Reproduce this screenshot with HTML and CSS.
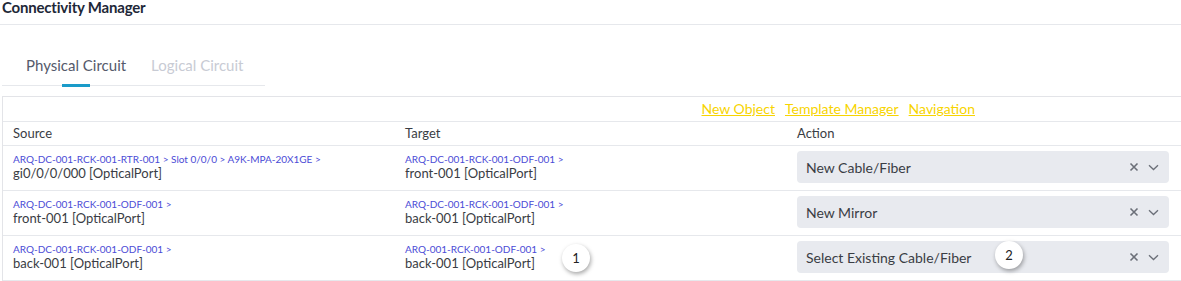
FILE: index.html
```html
<!DOCTYPE html>
<html lang="en">
  <head>
    <meta charset="UTF-8" />
    <meta name="viewport" content="width=device-width, initial-scale=1.0" />
    <title>Connectivity Manager</title>
    <link rel="stylesheet" href="styles.css">
  </head>
  <body>
    <div class="page-header">
      <h1 class="page-title">Connectivity Manager</h1>
    </div>

    <div class="tabs">
      <div class="tab active">Physical Circuit</div>
      <div class="tab">Logical Circuit</div>
    </div>

    <div class="panel">
      <div class="toolbar">
        <a href="#">New Object</a>
        <a href="#">Template Manager</a>
        <a href="#">Navigation</a>
      </div>

      <div class="grid-row grid-head">
        <div class="cell">Source</div>
        <div class="cell">Target</div>
        <div class="cell">Action</div>
      </div>

      <div class="grid-row">
        <div class="cell">
          <div class="path">ARQ-DC-001-RCK-001-RTR-001 &gt; Slot 0/0/0 &gt; A9K-MPA-20X1GE &gt;</div>
          <div class="port">gi0/0/0/000 [OpticalPort]</div>
        </div>
        <div class="cell">
          <div class="path">ARQ-DC-001-RCK-001-ODF-001 &gt;</div>
          <div class="port">front-001 [OpticalPort]</div>
        </div>
        <div class="cell">
          <div class="select">
            <span class="select-value">New Cable/Fiber</span>
            <span class="select-icons">
              <svg width="10" height="10" viewBox="0 0 10 10"><path d="M1.5 1.5 L8.5 8.5 M8.5 1.5 L1.5 8.5" stroke="#6b6f78" stroke-width="1.6" fill="none"/></svg>
              <svg width="11" height="7" viewBox="0 0 11 7"><path d="M1 1.2 L5.5 5.5 L10 1.2" stroke="#6b6f78" stroke-width="1.3" fill="none"/></svg>
            </span>
          </div>
        </div>
      </div>

      <div class="grid-row">
        <div class="cell">
          <div class="path">ARQ-DC-001-RCK-001-ODF-001 &gt;</div>
          <div class="port">front-001 [OpticalPort]</div>
        </div>
        <div class="cell">
          <div class="path">ARQ-DC-001-RCK-001-ODF-001 &gt;</div>
          <div class="port">back-001 [OpticalPort]</div>
        </div>
        <div class="cell">
          <div class="select">
            <span class="select-value">New Mirror</span>
            <span class="select-icons">
              <svg width="10" height="10" viewBox="0 0 10 10"><path d="M1.5 1.5 L8.5 8.5 M8.5 1.5 L1.5 8.5" stroke="#6b6f78" stroke-width="1.6" fill="none"/></svg>
              <svg width="11" height="7" viewBox="0 0 11 7"><path d="M1 1.2 L5.5 5.5 L10 1.2" stroke="#6b6f78" stroke-width="1.3" fill="none"/></svg>
            </span>
          </div>
        </div>
      </div>

      <div class="grid-row">
        <div class="cell">
          <div class="path">ARQ-DC-001-RCK-001-ODF-001 &gt;</div>
          <div class="port">back-001 [OpticalPort]</div>
        </div>
        <div class="cell has-badge">
          <div class="path">ARQ-001-RCK-001-ODF-001 &gt;</div>
          <div class="port">back-001 [OpticalPort]</div>
          <span class="badge badge-1">1</span>
        </div>
        <div class="cell has-badge">
          <div class="select">
            <span class="select-value">Select Existing Cable/Fiber</span>
            <span class="select-icons">
              <svg width="10" height="10" viewBox="0 0 10 10"><path d="M1.5 1.5 L8.5 8.5 M8.5 1.5 L1.5 8.5" stroke="#6b6f78" stroke-width="1.6" fill="none"/></svg>
              <svg width="11" height="7" viewBox="0 0 11 7"><path d="M1 1.2 L5.5 5.5 L10 1.2" stroke="#6b6f78" stroke-width="1.3" fill="none"/></svg>
            </span>
          </div>
          <span class="badge badge-2">2</span>
        </div>
      </div>
    </div>
  </body>
</html>
```

FILE: styles.css
```css
* {
  box-sizing: border-box;
}

body {
  margin: 0;
  font-family: Lato, "Open Sans", sans-serif;
  color: #333;
  background: #fff;
  overflow: hidden;
}

/* 상단 타이틀 */
.page-header {
  height: 25px;
  border-bottom: 1px solid #e6e8ec;
}

.page-title {
  margin: 0 0 0 2px;
  font-size: 15px;
  line-height: 14px;
  font-weight: 700;
  letter-spacing: -0.2px;
  color: #1e2838;
}

/* 탭 */
.tabs {
  display: flex;
  width: 263px;
  margin: 26px 0 0 2px;
  border-bottom: 1px solid #e6e8ec;
}

.tab {
  position: relative;
  padding: 5px 0 11px 24px;
  font-size: 15px;
  line-height: 18px;
  color: #c8cbd4;
}

.tab + .tab {
  padding-left: 25px;
}

.tab.active {
  color: #555a6b;
}

.tab.active::after {
  content: "";
  position: absolute;
  bottom: -2px;
  left: calc(50% + 12px - 14px);
  width: 28px;
  height: 3px;
  background: #1a9bc9;
}

/* 테이블 패널 */
.panel {
  width: 1181px;
  margin: 10px 0 0 2px;
  border: 1px solid #e3e4e8;
  border-right: none;
}

.toolbar {
  display: flex;
  justify-content: flex-end;
  gap: 10px;
  height: 25px;
  padding: 3px 208px 0 0;
  border-bottom: 1px solid #e6e8ec;
  font-size: 14px;
}

.toolbar a {
  color: #f7d400;
}

.grid-row {
  display: grid;
  grid-template-columns: 392px 392px 1fr;
  height: 45px;
  border-bottom: 1px solid #e6e8ec;
}

.grid-head {
  height: 24px;
  font-size: 13px;
  color: #3a3d44;
}

.grid-head .cell {
  padding-top: 3px;
}

.cell {
  position: relative;
  padding: 7px 10px 0;
}

.path {
  font-size: 10px;
  line-height: 13px;
  color: #4b4bd6;
}

.port {
  font-size: 13px;
  line-height: 15px;
  color: #3a3d44;
}

.select {
  display: flex;
  align-items: center;
  justify-content: space-between;
  height: 32px;
  margin-top: -2px;
  width: 372px;
  padding: 0 10px 0 9px;
  border-radius: 4px;
  background: #e8eaef;
  font-size: 14px;
  color: #3a3d44;
}

.select-icons {
  display: flex;
  align-items: center;
  gap: 9px;
}

/* 번호 배지 */
.badge {
  position: absolute;
  width: 28px;
  height: 28px;
  border-radius: 50%;
  background: #fff;
  box-shadow: 1px 2px 4px rgba(0, 0, 0, 0.35);
  font-size: 13px;
  line-height: 28px;
  text-align: center;
  color: #222;
}

.badge-1 {
  left: 167px;
  top: 8px;
}

.badge-2 {
  left: 208px;
  top: 5px;
}
```
